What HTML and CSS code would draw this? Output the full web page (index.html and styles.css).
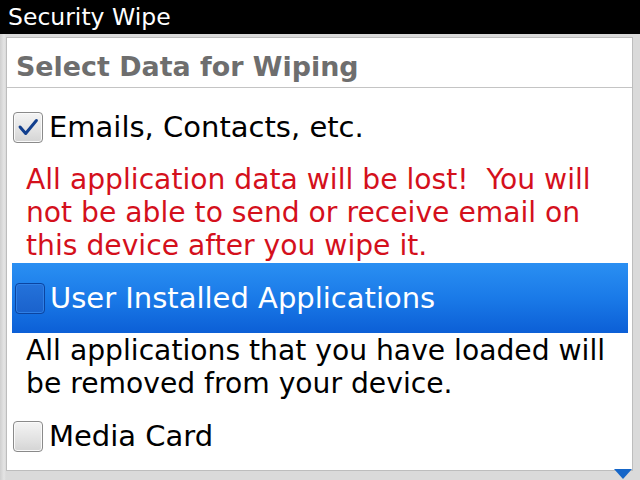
FILE: index.html
```html
<!DOCTYPE html>
<html>
<head>
<meta charset="utf-8">
<link rel="stylesheet" href="styles.css">
</head>
<body>
<div class="screen">
  <div class="titlebar">Security Wipe</div>
  <div class="frame">
    <div class="panel">
      <div class="header">Select Data for Wiping</div>
      <div class="row first">
        <span class="box checked">
          <svg viewBox="0 0 30 30" width="30" height="30"><path d="M6.5 15 L12.5 22 L24 8" fill="none" stroke="#123f8e" stroke-width="3.2" stroke-linecap="round" stroke-linejoin="round"/></svg>
        </span>
        <span class="label">Emails, Contacts, etc.</span>
      </div>
      <p class="note warn">All application data will be lost!&nbsp; You will not be able to send or receive email on this device after you wipe it.</p>
      <div class="row selected">
        <span class="box blue"></span>
        <span class="label">User Installed Applications</span>
      </div>
      <p class="note">All applications that you have loaded will be removed from your device.</p>
      <div class="row last">
        <span class="box"></span>
        <span class="label">Media Card</span>
      </div>
    </div>
    <div class="scroll-arrow"></div>
  </div>
</div>
</body>
</html>
```
FILE: styles.css
```css
html, body {
  margin: 0;
  padding: 0;
}
body {
  width: 640px;
  height: 480px;
  overflow: hidden;
  background: #d8d8d8;
  font-family: "DejaVu Sans", "Noto Sans", sans-serif;
}
.screen {
  width: 640px;
  height: 480px;
  display: flex;
  flex-direction: column;
}
.titlebar {
  height: 34px;
  background: #000;
  color: #fff;
  font-size: 23.5px;
  line-height: 34px;
  padding-left: 8px;
  flex: none;
}
.frame {
  position: relative;
  flex: 1;
  padding: 3px 7px 0 6px;
  background: linear-gradient(to right, #cfcfcf 0, #e4e4e4 4px, #dadada 6px);
}
.panel {
  background: #fff;
  border: 1px solid #bdbdbd;
  height: 434px;
  box-sizing: border-box;
  display: flex;
  flex-direction: column;
  overflow: hidden;
}
.header {
  height: 50px;
  box-sizing: border-box;
  padding: 13px 0 0 9px;
  font-weight: bold;
  font-size: 26.9px;
  line-height: 32px;
  color: #6e6e6e;
  border-bottom: 1px solid #c4c4c4;
  flex: none;
}
.row {
  height: 70px;
  display: flex;
  align-items: center;
  gap: 6px;
  padding-left: 6px;
  font-size: 29px;
  color: #000;
  flex: none;
}
.row.first {
  margin-top: 4px;
}
.row.selected {
  margin: 1px 4px 0 5px;
  padding-left: 3px;
  gap: 5px;
  background: linear-gradient(to bottom, #2a8ff2 0, #1a7ae8 50%, #0c5fd6 100%);
  color: #fff;
}
.row.last {
  margin-top: 1px;
}
.box {
  width: 30px;
  height: 31px;
  box-sizing: border-box;
  border: 1px solid #8a8a8a;
  border-radius: 4px;
  background: linear-gradient(to bottom, #f4f4f4 0, #e2e2e2 60%, #d4d4d4 100%);
  box-shadow: inset 0 0 0 1px #fafafa;
  flex: none;
  display: flex;
  align-items: center;
  justify-content: center;
}
.box svg {
  display: block;
}
.box.blue {
  border-color: #0b44a0;
  background: linear-gradient(to bottom, #2472da 0, #1a62cc 100%);
  box-shadow: inset 0 0 0 1px #2f80e6;
}
.note {
  margin: 1px 0 0 0;
  padding: 0 20px 0 19px;
  font-size: 28.2px;
  line-height: 33px;
  color: #000;
  flex: none;
}
.note.warn {
  color: #d4101c;
}
.scroll-arrow {
  position: absolute;
  right: 8px;
  bottom: 1px;
  width: 0;
  height: 0;
  border-left: 9px solid transparent;
  border-right: 9px solid transparent;
  border-top: 10px solid #1566c8;
}
```
